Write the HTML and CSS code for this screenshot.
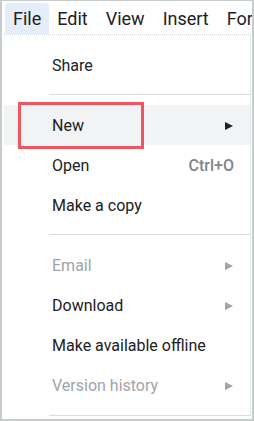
FILE: index.html
```html
<!DOCTYPE html>
<html lang="en">
<head>
    <meta charset="UTF-8">
    <meta name="viewport" content="width=device-width, initial-scale=1.0">
    <title>File menu</title>
    <link rel="stylesheet" href="styles.css">
</head>
<body>

<div class="frame">
    <!-- Top menu bar -->
    <div class="menubar">
        <div class="menu-tab active">File</div>
        <div class="menu-tab">Edit</div>
        <div class="menu-tab">View</div>
        <div class="menu-tab">Insert</div>
        <div class="menu-tab">Format</div>
    </div>

    <!-- File dropdown -->
    <div class="dropdown">
        <div class="item">Share</div>
        <div class="separator"></div>
        <div class="item hover">
            <span class="label">New</span>
            <span class="arrow"></span>
            <div class="callout"></div>
        </div>
        <div class="item">
            <span class="label">Open</span>
            <span class="shortcut">Ctrl+O</span>
        </div>
        <div class="item">Make a copy</div>
        <div class="separator"></div>
        <div class="item disabled">
            <span class="label">Email</span>
            <span class="arrow"></span>
        </div>
        <div class="item">
            <span class="label">Download</span>
            <span class="arrow muted"></span>
        </div>
        <div class="item">Make available offline</div>
        <div class="item disabled">
            <span class="label">Version history</span>
            <span class="arrow"></span>
        </div>
        <div class="separator last"></div>
    </div>
</div>

</body>
</html>
```

FILE: styles.css
```css
html, body {
    margin: 0;
    padding: 0;
    background-color: #ffffff;
}

body {
    font-family: Roboto, 'Liberation Sans', sans-serif;
    color: #202124;
}

.frame {
    width: 254px;
    height: 421px;
    box-sizing: border-box;
    border: 2px solid #c6cdca;
    border-top-width: 1px;
    overflow: hidden;
    background-color: #ffffff;
}

.menubar {
    display: flex;
    padding: 2px 0 0 3px;
    height: 31px;
    white-space: nowrap;
    overflow: hidden;
}

.menu-tab {
    font-size: 18px;
    line-height: 31px;
    padding: 0 8px;
    margin-right: 2px;
    border-radius: 4px 4px 0 0;
}

.menu-tab.active {
    margin-right: 0;
    background-color: #e6edfa;
}

.dropdown {
    margin-left: 2px;
    margin-right: 1px;
    border-top: 1px dotted #d4d7db;
    border-right: 1px solid #e3e5e8;
    padding-top: 10px;
    background-color: #ffffff;
}

.item {
    position: relative;
    display: flex;
    align-items: center;
    justify-content: space-between;
    height: 40px;
    padding: 1px 16px 0 48px;
    box-sizing: border-box;
    font-size: 16px;
    white-space: nowrap;
}

.item.hover {
    background-color: #f1f3f4;
}

.item.disabled {
    color: #a0a3a8;
}

.shortcut {
    color: #80868b;
    font-weight: 500;
}

.arrow {
    width: 0;
    height: 0;
    margin-right: 1px;
    border-top: 4px solid transparent;
    border-bottom: 4px solid transparent;
    border-left: 8px solid #202124;
}

.disabled .arrow,
.arrow.muted {
    border-left-color: #a0a3a8;
}

.separator {
    height: 1px;
    background-color: #dadce0;
    margin: 9px 0 10px 45px;
}

.separator.last {
    margin-top: 10px;
}

/* red highlight box drawn over the New row */
.callout {
    position: absolute;
    top: -3px;
    left: 14px;
    width: 126px;
    height: 47px;
    box-sizing: border-box;
    border: 3px solid #ef5662;
}
```
